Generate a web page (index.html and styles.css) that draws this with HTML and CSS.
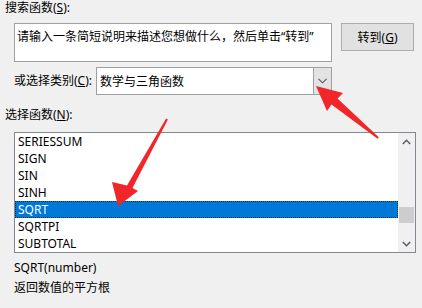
FILE: index.html
```html
<!DOCTYPE html>
<html lang="zh-CN">
<head>
<meta charset="utf-8">
<title>插入函数</title>
<link rel="stylesheet" href="styles.css">
</head>
<body>
<div class="dialog">
  <div class="label label-search">搜索函数(<u>S</u>):</div>
  <div class="search-row">
    <div class="search-box">请输入一条简短说明来描述您想做什么，然后单击“转到”</div>
    <div class="btn">转到(<u>G</u>)</div>
  </div>
  <div class="cat-row">
    <div class="label cat-label">或选择类别(<u>C</u>):</div>
    <div class="select">
      <span class="select-text">数学与三角函数</span>
      <span class="select-arrow">
        <svg width="9" height="6" viewBox="0 0 9 6"><path d="M0.5 0.8 L4.5 4.8 L8.5 0.8" fill="none" stroke="#555" stroke-width="1.1"/></svg>
      </span>
    </div>
  </div>
  <div class="label label-fn">选择函数(<u>N</u>):</div>
  <div class="listbox">
    <ul class="rows">
      <li>SERIESSUM</li>
      <li>SIGN</li>
      <li>SIN</li>
      <li>SINH</li>
      <li class="selected">SQRT</li>
      <li>SQRTPI</li>
      <li>SUBTOTAL</li>
    </ul>
    <div class="scrollbar">
      <span class="sb-btn">
        <svg width="9" height="6" viewBox="0 0 9 6"><path d="M0.8 5 L4.5 1.3 L8.2 5" fill="none" stroke="#606060" stroke-width="1.6"/></svg>
      </span>
      <div class="sb-track"><div class="sb-thumb"></div></div>
      <span class="sb-btn">
        <svg width="9" height="6" viewBox="0 0 9 6"><path d="M0.8 1 L4.5 4.7 L8.2 1" fill="none" stroke="#606060" stroke-width="1.6"/></svg>
      </span>
    </div>
  </div>
  <div class="desc">
    <div>SQRT(number)</div>
    <div>返回数值的平方根</div>
  </div>
  <svg class="arrows" width="422" height="308" viewBox="0 0 422 308">
    <polygon fill="#f0262a" points="316,86 343,93 337.5,98.5 378.8,137.2 377.6,138.8 331.5,104.5 327,111"/>
    <polygon fill="#f0262a" points="118,206 138,191 132.5,188 167.9,119.5 166.1,118.5 127,185.5 112,182"/>
  </svg>
</div>
</body>
</html>
```

FILE: styles.css
```css
html, body {
  margin: 0;
  padding: 0;
  background: #f0f0f0;
}
body {
  font-family: "Noto Sans", "Noto Sans CJK SC", sans-serif;
  font-size: 12px;
  color: #000;
  width: 422px;
  height: 308px;
  overflow: hidden;
}
.dialog {
  position: relative;
  width: 422px;
  height: 308px;
}
.label {
  line-height: 12px;
  white-space: nowrap;
}
.label u {
  text-underline-offset: 1px;
}
.label-search {
  line-height: 14px;
  padding: 1px 0 8px 5px;
}
.search-row {
  display: flex;
  align-items: flex-start;
  padding-left: 14px;
  gap: 9px;
}
.search-box {
  box-sizing: border-box;
  width: 318px;
  height: 39px;
  background: #fff;
  border: 1px solid #a0a0a0;
  padding: 5px 0 0 2px;
  line-height: 16px;
  white-space: nowrap;
  overflow: hidden;
}
.btn {
  box-sizing: border-box;
  width: 73px;
  height: 28px;
  background: #e1e1e1;
  border: 1px solid #adadad;
  display: flex;
  align-items: center;
  justify-content: center;
}
.cat-row {
  display: flex;
  align-items: center;
  margin-top: 5px;
  padding-left: 14px;
}
.cat-label {
  width: 82px;
}
.select {
  box-sizing: border-box;
  width: 236px;
  height: 28px;
  background: #fff;
  border: 1px solid #a0a0a0;
  display: flex;
  align-items: stretch;
}
.select-text {
  flex: 1;
  display: flex;
  align-items: center;
  padding-left: 3px;
}
.select-arrow {
  width: 17px;
  background: #e3e3e3;
  border-left: 1px solid #a0a0a0;
  display: flex;
  align-items: center;
  justify-content: center;
}
.label-fn {
  padding-left: 5px;
  margin-top: 14px;
}
.listbox {
  box-sizing: border-box;
  margin: 11px 0 0 14px;
  width: 402px;
  height: 121px;
  background: #fff;
  border: 1px solid #828790;
  display: flex;
  overflow: hidden;
}
.rows {
  list-style: none;
  margin: 0;
  padding: 0;
  flex: 1;
}
.rows li {
  height: 17px;
  line-height: 17px;
  padding-left: 3px;
  white-space: nowrap;
}
.rows li.selected {
  background: #0078d7;
  color: #fff;
  outline: 1px dotted #1a2b4a;
  outline-offset: -1px;
}
.scrollbar {
  width: 17px;
  background: #f0f0f0;
  display: flex;
  flex-direction: column;
}
.sb-btn {
  height: 17px;
  display: flex;
  align-items: center;
  justify-content: center;
}
.sb-track {
  flex: 1;
  position: relative;
}
.sb-thumb {
  margin: 57px 1px 0 1px;
  height: 16px;
  background: #cdcdcd;
}
.desc {
  margin-top: 5px;
  padding-left: 14px;
  line-height: 20px;
}
.arrows {
  position: absolute;
  left: 0;
  top: 0;
  pointer-events: none;
}
```
